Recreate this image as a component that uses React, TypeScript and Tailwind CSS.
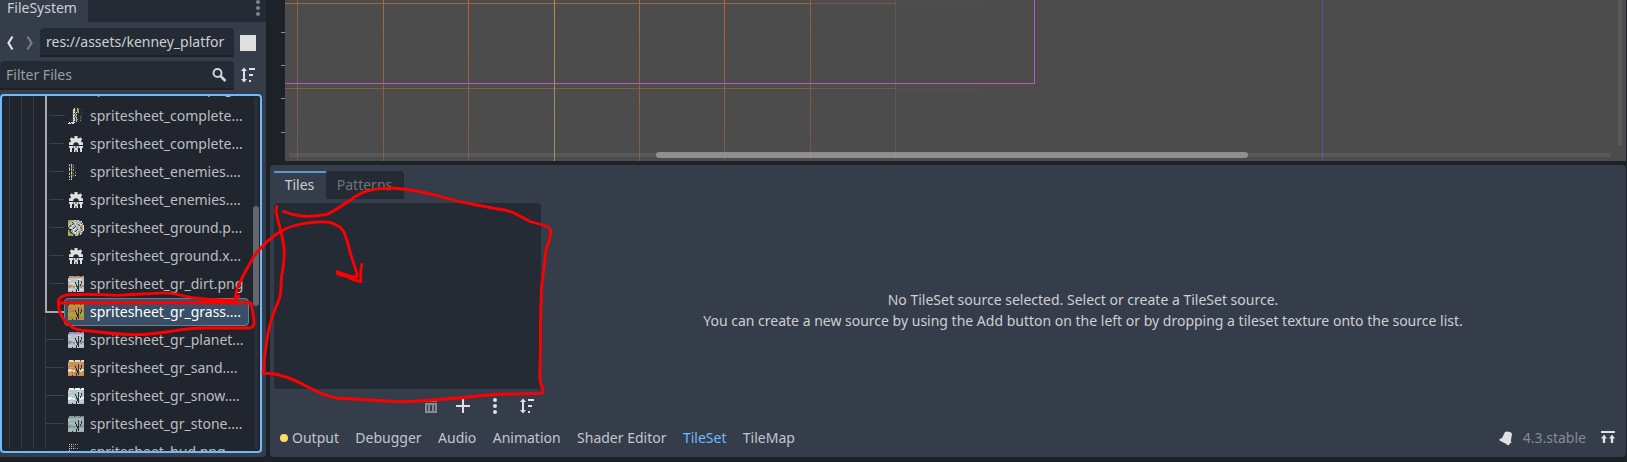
import React from "react";

type ThumbKind = "complete" | "enemies" | "ground" | "dirt" | "grass" | "planet" | "sand" | "snow" | "stone" | "hud" | "txt";

const files: { name: string; kind: ThumbKind }[] = [
  { name: "spritesheet_complete...", kind: "complete" },
  { name: "spritesheet_complete...", kind: "txt" },
  { name: "spritesheet_enemies....", kind: "enemies" },
  { name: "spritesheet_enemies....", kind: "txt" },
  { name: "spritesheet_ground.p...", kind: "ground" },
  { name: "spritesheet_ground.x...", kind: "txt" },
  { name: "spritesheet_gr_dirt.png", kind: "dirt" },
  { name: "spritesheet_gr_grass....", kind: "grass" },
  { name: "spritesheet_gr_planet...", kind: "planet" },
  { name: "spritesheet_gr_sand....", kind: "sand" },
  { name: "spritesheet_gr_snow....", kind: "snow" },
  { name: "spritesheet_gr_stone....", kind: "stone" },
  { name: "spritesheet_hud.png", kind: "hud" },
];

const palettes: Record<string, [string, string, string]> = {
  dirt: ["#b7c6c8", "#c98e5c", "#dfe6e6"],
  grass: ["#c18b50", "#86c21c", "#b07a45"],
  planet: ["#b3c0c4", "#a583b8", "#ccd5d8"],
  sand: ["#c68d57", "#e9dcc0", "#d8a673"],
  snow: ["#b4c6c8", "#eef5f5", "#cfdcdc"],
  stone: ["#9fb1b2", "#84989a", "#b5c3c3"],
};

const pixels: Record<string, string[]> = {
  complete: [
    ".....kwk.yk.....", ".....bwk.oy..k..", "....kwwk.or..k..", ".....wbk.oo.....",
    "....kwwkwro..k..", ".....wkbk.k.....", "....kbwkw....k..", "....kwwko...kk..",
    ".....wkwk.k.....", "....kwbkw...gk..", ".....wwkb.k..k..", "..k.kbwkoo..kk..",
    "...k.wwkw...g...", "....kwkkb.k..k..", ".w.wwbwk...k....", "wwwkwwk.........",
  ],
  enemies: [
    ".p.wk...........", ".w.bkg..........", "...wk..k........", ".p.gkg..........",
    ".w.pkk.k........", ".y.wkg..........", ".p.gkg.k........", "...bkk..........",
    ".r.yk..p........", ".p.wkg..........", ".w.gk..k........", "...pkg.w........",
    ".y.wkk..........", ".p.b............", "...g............", ".w.w............",
  ],
  ground: [
    "ggyogbwccbwk....", "gyoowbcccwbccw..", "ygowkcwwccbwcc..", "obwcckcwbcwcckw.",
    "bwcckobwcckcwwc.", "cckowwcbwcckcoow", "wkobwcckcwbwcoow", "kcwwcckwcccwkoow",
    ".ccwckwwccwcckow", "k.kkcwwcckbwccow", "yk.ccwcckwwcckcw", "ggkcbwckcwoocwc.",
    "ygkkccwwbwoocck.", "oygkkcwwcwokcw..", "gyoygkkcccckw...", "ooggykkbcck.....",
  ],
  hud: [
    ".w.w.b.y.o......", "................", ".b.w.o.k........", "................",
    ".w.w.w.g.p......", "................", ".w.k............", "................",
    ".w.w............", "................", "", "", "", "", "", "",
  ],
};

const pixelColors: Record<string, string> = {
  w: "#d5dcda", k: "#394340", o: "#c98b57", y: "#c6cf5a", r: "#d5523e",
  g: "#6fa03c", b: "#86a9b4", p: "#cf86c5", c: "#a5afad",
};

function Thumb({ kind }: { kind: ThumbKind }) {
  if (kind === "txt") {
    return (
      <svg className="h-4 w-4 shrink-0" viewBox="0 0 16 16" fill="#e0e0e0">
        <path d="M6.500 0h3v2l1.300.6L12.300 1.300l2 2L13 4.800l.5 1.400H15v2.800h-4.300a2.700 2.700 0 0 0-5.400 0H1V6.200h1.500L3 4.800 1.700 3.300l2-2 1.500 1.300L6.500 2z" />
        <path d="M1 10h4.500v2H4v4H2v-4H1zM10.500 10H15v2h-1v4h-2v-4h-1.500zM6 10h1.500v2h1v-2H10v2.500H9.500v1h.5V16H8.500v-2h-1v2H6v-2.500h.5v-1H6z" />
      </svg>
    );
  }
  const map = pixels[kind];
  if (map) {
    return (
      <svg className="h-4 w-4 shrink-0" viewBox="0 0 16 16" shapeRendering="crispEdges">
        {map.flatMap((row, y) =>
          row.split("").map((c, x) =>
            pixelColors[c] ? <rect key={x + "-" + y} x={x} y={y} width="1" height="1" fill={pixelColors[c]} /> : null
          )
        )}
      </svg>
    );
  }
  const [base, top, light] = palettes[kind];
  return (
    <svg className="h-4 w-4 shrink-0" viewBox="0 0 16 16" shapeRendering="crispEdges">
      <path fill={base} d="M0 0h16v16H0z" />
      <path fill={light} d="M0 4h3v1H0zM9 3h4v1H9zM2 7h4v1H2zM12 7h3v1h-3zM1 13h3v1H1zM12 13h3v1h-3z" />
      <path fill={top} d="M1 0h4v1h1v1H1zM7 0h5v2H7zM13 0h3v2h-3zM0 9h4v1h3v2H5v-1H3v1H0zM11 9h5v2h-2v1h-2v-1h-1z" />
      <path fill="#2b3438" d="M0 0h1v2H0zM6 0h1v1H6zM12 0h1v1h-1zM7 6h1v2H7zM8 8h1v3H8zM10 4h1v7h-1zM13 5h1v3h-1zM12 8h1v2h-1zM9 10h2v3H9zM8 13h1v3H8zM10 13h1v2h-1zM4 15h1v1H4z" />
    </svg>
  );
}

function SortIcon() {
  return (
    <svg className="h-4 w-4 shrink-0" viewBox="0 0 16 16" fill="#e0e0e0">
      <path d="M4 .5 7 4H5v8h2l-3 3.500L1 12h2V4H1zM9 1h6v2H9zM9 7h4v2H9zM9 13h2v2H9z" />
    </svg>
  );
}

function FileSystem() {
  return (
    <aside className="flex h-[457px] w-[266px] shrink-0 flex-col rounded-br-sm bg-[#363d4a]">
      <div className="flex h-[22px] shrink-0 justify-between bg-[#252b34]">
        <div className="flex h-[22px] w-[88px] items-start bg-[#363d4a] pl-[7px] leading-[16px] text-[#cdcfd2]">FileSystem</div>
        <svg className="h-4 w-4" viewBox="0 0 16 16" fill="#808389"><circle cx="8" cy="2" r="2" /><circle cx="8" cy="8" r="2" /><circle cx="8" cy="14" r="2" /></svg>
      </div>
      <div className="mt-[6px] flex h-[29px] shrink-0 items-center">
        <svg className="h-4 w-10" viewBox="0 0 40 16" fill="none" strokeWidth="2.200">
          <path d="M12.500 1.500 8.500 8l4 6.500" stroke="#e0e0e0" /><path d="m27.500 1.500 4 6.500-4 6.500" stroke="#777c85" />
        </svg>
        <div className="h-[29px] w-[194px] overflow-hidden whitespace-nowrap rounded-t-sm border-b-2 border-[#1d2229] bg-[#252b34] pl-[6px] leading-[28px] text-[#cdcfd2]">res://assets/kenney_platfor</div>
        <div className="ml-[6px] h-4 w-4 bg-[#e0e0e0]" />
      </div>
      <div className="mt-1 flex h-[29px] shrink-0 items-center">
        <div className="flex h-[29px] w-[234px] items-center justify-between rounded-t-sm border-b-2 border-[#1d2229] bg-[#252b34] pl-[6px] pr-[7px] text-[#9a9da2]">
          <span>Filter Files</span>
          <svg className="h-4 w-4" viewBox="0 0 16 16" fill="none" stroke="#d0d2d4" strokeWidth="2"><circle cx="6.500" cy="6" r="4" /><path d="m9.500 9 5 5" strokeWidth="2.600" /></svg>
        </div>
        <div className="-mt-px ml-[6px]"><SortIcon /></div>
      </div>
      <div className="relative mt-1 h-[359px] w-[262px] shrink-0 overflow-hidden rounded-sm border-2 border-[#70bafa] bg-[#21262e]">
        <svg className="absolute -left-0.5 -top-0.5 h-[359px] w-[262px]" viewBox="0 94 262 359" shapeRendering="crispEdges">
          <path d="M9.500 96v353M21.500 96v353M33.500 96v353M45.500 315v134" stroke="#373c44" />
          {[115, 143, 171, 199, 227, 255, 283].map((y) => <path key={y} d={`M49 ${y + 0.5}h15`} stroke="#3c4149" />)}
          {[339, 367, 395, 423].map((y) => <path key={y} d={`M46 ${y + 0.5}h18`} stroke="#3c4149" />)}
          <path d="M46 96v216h18" fill="none" stroke="#a6a8ab" strokeWidth="2" />
          <path fill="#2b3038" d="M254 98h4v351h-4z" />
        </svg>
        <div className="-mt-[22px] h-7 pl-[88px] leading-7 text-[#bcbec1]">spritesheet_build.png</div>
        {files.map((f, i) => (
          <div key={i} className={f.kind === "grass"
            ? "relative ml-[62px] flex h-7 w-[185px] items-center"
            : "relative ml-[62px] flex h-7 w-[188px] items-center"}>
            {f.kind === "grass" && <div className="absolute inset-x-0 top-0 h-7 rounded-sm border border-[#747b86] bg-[#394f68]" />}
            <div className="relative flex items-center pl-1">
              <Thumb kind={f.kind} />
              <span className={f.kind === "grass" ? "ml-[6px] whitespace-nowrap leading-7 text-white" : "ml-[6px] whitespace-nowrap leading-7 text-[#bcbec1]"}>{f.name}</span>
            </div>
          </div>
        ))}
        <div className="absolute left-[251px] top-[110px] h-[100px] w-[6px] rounded-full bg-[#63666b]" />
      </div>
    </aside>
  );
}

function Viewport() {
  return (
    <svg className="block h-[161px] w-[1356px]" viewBox="270 0 1356 161" shapeRendering="crispEdges">
      <path fill="#1d2229" d="M270 0h15v161h-15z" />
      <path fill="#4c4c4c" d="M285 0h1341v161H285z" />
      <path d="M281 32.500h4M281 65.500h4M281 98.500h4M281 132.500h4" stroke="#8b8e93" />
      <defs>
        <linearGradient id="fadeY" x1="0" y1="0" x2="0" y2="161" gradientUnits="userSpaceOnUse">
          <stop offset="0" stopColor="#b46639" /><stop offset="1" stopColor="#7c5b46" />
        </linearGradient>
        <linearGradient id="axis" x1="0" y1="0" x2="0" y2="161" gradientUnits="userSpaceOnUse">
          <stop offset="0" stopColor="#b58f4a" /><stop offset="1" stopColor="#95925e" />
        </linearGradient>
      </defs>
      <path fill="#a96339" d="M285 3h525v1H285z" /><path fill="#805743" d="M810 3h85v1h-85z" /><path fill="#5b4e48" d="M895 3h86v1h-86z" />
      <path fill="#8d5d42" d="M285 88h525v1H285z" /><path fill="#7a5744" d="M810 88h85v1h-85z" /><path fill="#594d47" d="M895 88h86v1h-86z" />
      <path fill="url(#fadeY)" d="M383 0h1v161h-1zM468 0h1v161h-1zM639 0h1v161h-1zM724 0h1v161h-1z" />
      <path fill="url(#fadeY)" opacity=".75" d="M297 0h1v161h-1zM810 0h1v161h-1z" />
      <path fill="#6a5349" d="M895 0h1v161h-1z" /><path fill="#504e4d" d="M981 0h1v161h-1z" />
      <path fill="url(#axis)" d="M554 0h1v161h-1z" />
      <path d="M285 83.500h749.500V0" fill="none" stroke="#c157c0" />
      <path fill="#5653a0" d="M1322 0h1v161h-1z" />
      <path fill="#fff" fillOpacity=".07" d="M289 153h1321v4H289zM1618 0h4v145h-4z" />
      <rect x="656" y="152" width="592" height="6" rx="3" fill="#a5a5a5" fillOpacity=".72" shapeRendering="auto" />
    </svg>
  );
}

function BottomPanel() {
  return (
    <section className="mt-1 flex h-[292px] w-[1356px] flex-col rounded-sm bg-[#363d4a] px-1 pt-[6px]">
      <div className="flex h-[28px] shrink-0">
        <div className="w-[52px] border-t-2 border-[#5b98d0] pr-px text-center leading-[24px] text-[#cdcfd2]">Tiles</div>
        <div className="w-[78px] rounded-t-sm bg-[#252b34] pr-px text-center leading-[27px] text-[#6f747c]">Patterns</div>
      </div>
      <div className="mt-1 flex h-[216px] shrink-0">
        <div className="w-[267px]">
          <div className="h-[186px] rounded-sm bg-[#252b34]" />
          <div className="mt-[9px] flex justify-end gap-4 pr-[6px]">
            <svg className="h-4 w-4" viewBox="0 0 16 16" fill="#858a92" shapeRendering="crispEdges"><path d="M5 1h6v1h3v2H2V2h3zM2 5h12v10H2zM4 7v6h1V7zM7 7v6h2V7zM11 7v6h1V7z" fillRule="evenodd" /></svg>
            <svg className="h-4 w-4" viewBox="0 0 16 16" fill="#e0e0e0"><path d="M7 1h2v6h6v2H9v6H7V9H1V7h6z" /></svg>
            <svg className="h-4 w-4" viewBox="0 0 16 16" fill="#e0e0e0"><circle cx="8" cy="2" r="2" /><circle cx="8" cy="8" r="2" /><circle cx="8" cy="14" r="2" /></svg>
            <SortIcon />
          </div>
        </div>
        <div className="ml-1 flex flex-1 flex-col items-center justify-center pb-[2px] pr-px leading-[21px] text-[#cdcfd2]">
          <p>No TileSet source selected. Select or create a TileSet source.</p>
          <p>You can create a new source by using the Add button on the left or by dropping a tileset texture onto the source list.</p>
        </div>
      </div>
      <div className="flex h-[38px] items-center pb-[1px] pl-[6px] pr-[6px] text-[#c3c6ca]">
        <span className="h-2 w-2 rounded-full bg-[#ffdd65]" />
        <div className="ml-1 flex gap-[16.400px]">
          <span>Output</span><span>Debugger</span><span>Audio</span><span>Animation</span><span>Shader Editor</span>
          <span className="text-[#70bafa]">TileSet</span><span>TileMap</span>
        </div>
        <svg className="ml-auto h-4 w-4" viewBox="0 0 16 16" fill="#e0e0e0"><path d="M7 2C9 .5 14 2 14 4l-1.200 7 .9 1.800-1.700.3c0 2.400-2.800 2.800-3.700 1L1.500 10.500V9L4 8z" /></svg>
        <span className="ml-[9px] text-[#868b93]">4.3.stable</span>
        <svg className="ml-[14px] h-4 w-4" viewBox="0 0 16 16" fill="#e0e0e0"><path d="M1 1h14v2H1zM4 4.500 7 8.500H5.200V13H2.800V8.500H1zM12 4.500l3 4h-1.800V13h-2.400V8.500H9z" /></svg>
      </div>
    </section>
  );
}

function Annotations() {
  return (
    <svg className="pointer-events-none absolute left-0 top-0 h-[462px] w-[1627px]" viewBox="0 0 1627 462" fill="none" stroke="#ff0000" strokeWidth="2.800" strokeLinecap="round" strokeLinejoin="round">
      <path d="M283.500 211.500Q292 215 302 216T326.500 214.500Q333 212 348 201.500T368 191Q381 187 398 188.500T435 195Q455 201 471.500 204T495 208.500Q508 210 515 213.500T530 221.500L543 225Q550 227 550.500 230T549.500 240Q546 248 545.500 254T541.500 287L540.500 320V350L539.700 376Q540 384 543 388.500Q543.500 393 541 393.300L525 393.700Q495 394 478 396T438 399.500Q410 402 395 401.500L337 398Q327 397 308 387T282 376Q275 373 263 373.300Q264 360 268 333Q270 322 274 312T280 297Q281 290 281.500 277Q285 259 284 247Q282 235 280 228T276 211.500L276.700 206.500" />
      <path d="M235 303Q235 292 240 282T254 256Q265 242 276.700 234Q288 227 293 226Q303 223 313.300 222.300T330 222.300Q341 226 344 232Q348 242 350 252L355.500 269Q358 275 356.500 277Q350 277 337 271.500L338 274.300L347 276.500Q355 281 361 281.500Q360 274 361.700 264.500" />
      <path d="M58.500 303Q57 297 68 294.700Q95 294 117 295.300Q139 294 153 293.500Q168 292 178 294.500Q187 297 200 298.500T234 300.500L239 296M234 301L235 304M240 302.700L251 303Q254 318 254 323Q254 327 250 328Q225 328 206.700 328T173 331Q149 335 133 334.700T90 331Q75 330 71.700 327Q64 321 63 318Q58 311 58.500 303Z" />
    </svg>
  );
}

export default function App() {
  return (
    <main className="relative flex h-[462px] w-[1627px] gap-1 overflow-hidden bg-[#1d2229] text-[14px] [font-family:'Noto_Sans',sans-serif]">
      <FileSystem />
      <div className="flex flex-col"><Viewport /><BottomPanel /></div>
      <Annotations />
    </main>
  );
}
